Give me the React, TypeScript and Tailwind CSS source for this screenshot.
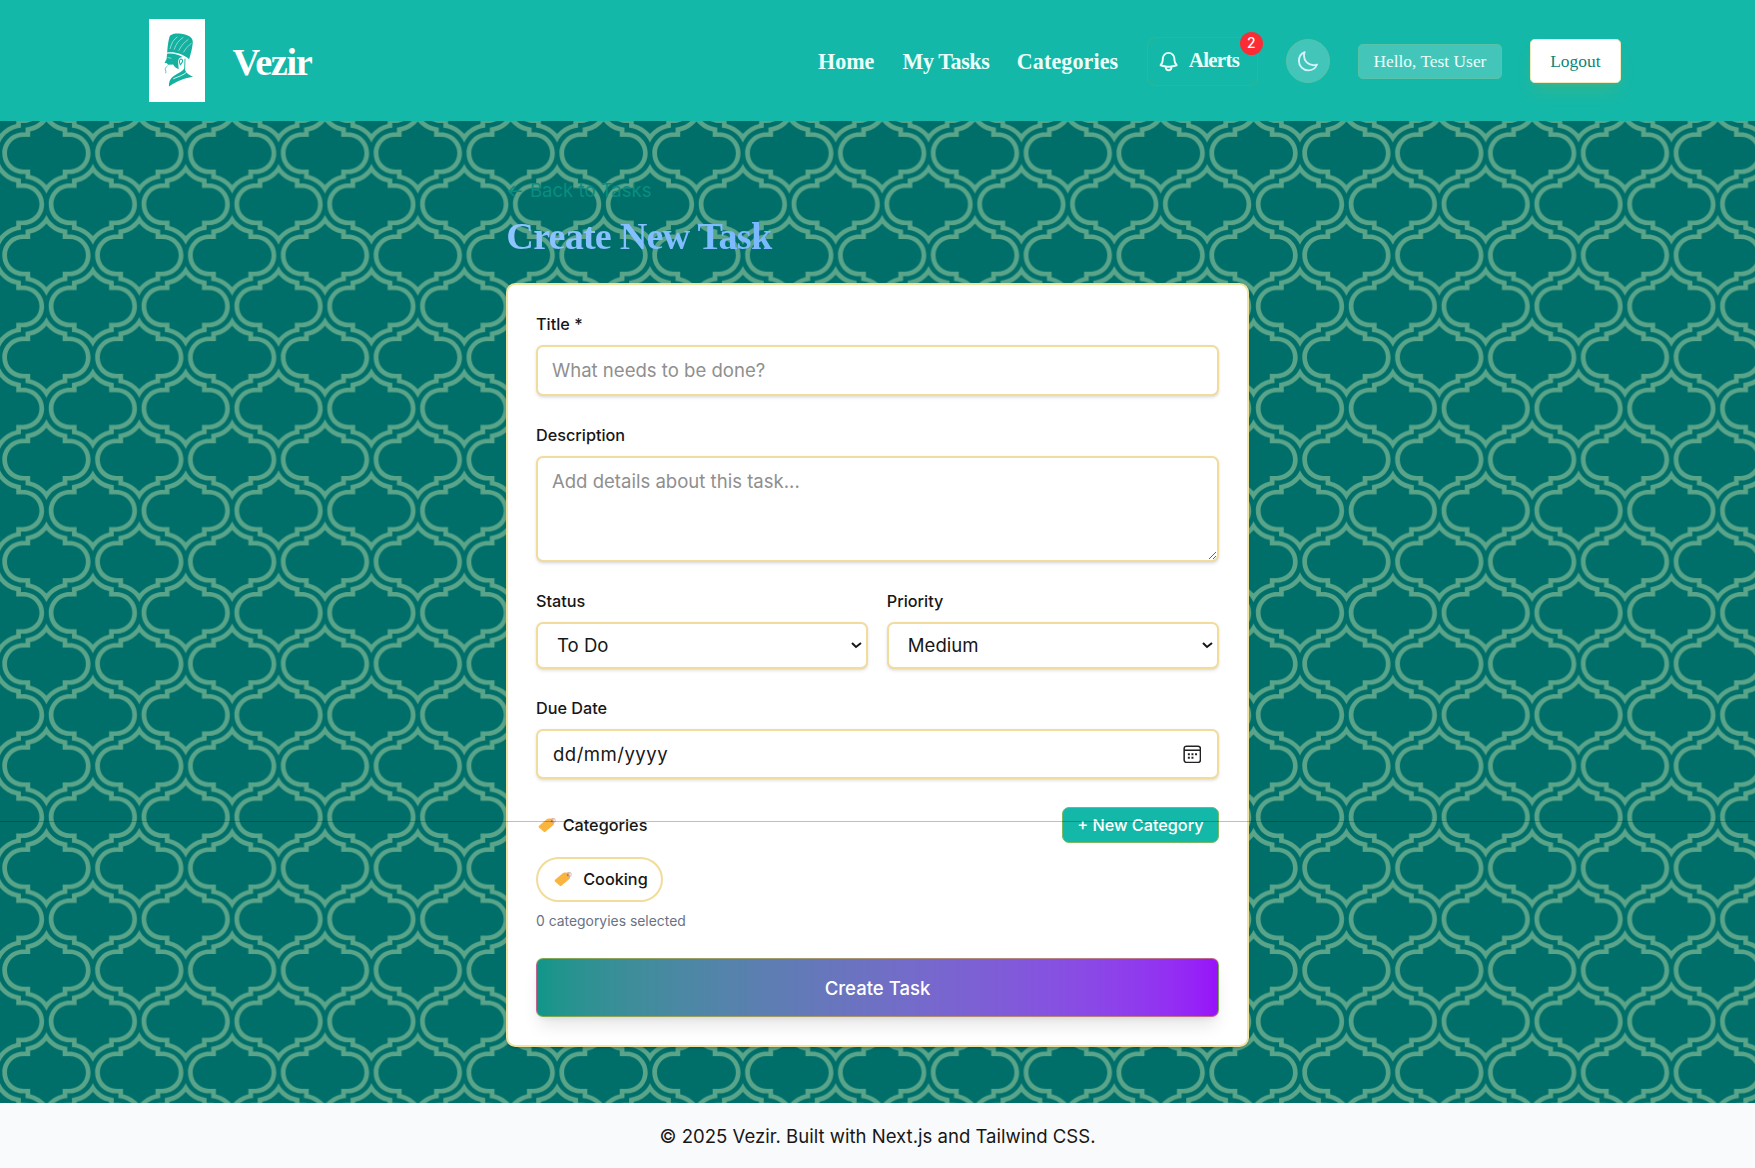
import React from "react";

const moroccan =
  "M22 21.91V26h-2c-9.94 0-18 8.06-18 18 0 9.943 8.058 18 18 18h2v4.09c8.012.722 14.785 5.738 18 12.73 3.212-6.99 9.983-12.008 18-12.73V62h2c9.94 0 18-8.06 18-18 0-9.943-8.058-18-18-18h-2v-4.09c-8.012-.722-14.785-5.738-18-12.73-3.212 6.99-9.983 12.008-18 12.73zM54 58v4.696c-5.574 1.316-10.455 4.428-14 8.69-3.545-4.262-8.426-7.374-14-8.69V58h-5.993C12.27 58 6 51.734 6 44c0-7.732 6.275-14 14.007-14H26v-4.696c5.574-1.316 10.455-4.428 14-8.69 3.545 4.262 8.426 7.374 14 8.69V30h5.993C67.73 30 74 36.266 74 44c0 7.732-6.275 14-14.007 14H54zM42 88c0-9.94 8.06-18 18-18h2v-4.09c8.016-.722 14.787-5.738 18-12.73v7.434c-3.545 4.262-8.426 7.374-14 8.69V74h-5.993C52.275 74 46 80.268 46 88h-4zm-4 0c0-9.943-8.058-18-18-18h-2v-4.09c-8.012-.722-14.785-5.738-18-12.73v7.434c3.545 4.262 8.426 7.374 14 8.69V74h5.993C27.73 74 34 80.266 34 88h4zm4-88c0 9.943 8.058 18 18 18h2v4.09c8.012.722 14.785 5.738 18 12.73v-7.434c-3.545-4.262-8.426-7.374-14-8.69V14h-5.993C52.27 14 46 7.734 46 0h-4zM0 34.82c3.213-6.992 9.984-12.008 18-12.73V18h2c9.94 0 18-8.06 18-18h-4c0 7.732-6.275 14-14.007 14H14v4.696c-5.574 1.316-10.455 4.428-14 8.69v7.433z";

function Backdrop() {
  return (
    <svg className="absolute inset-0 -z-10 h-full w-full" aria-hidden="true">
      <defs>
        <pattern id="moroccan" width="80" height="88" patternUnits="userSpaceOnUse">
          <path d={moroccan} fill="#5aa489" fillRule="evenodd" />
        </pattern>
      </defs>
      <rect width="100%" height="100%" fill="url(#moroccan)" />
    </svg>
  );
}

function Logo() {
  return (
    <svg viewBox="0 0 48 72" preserveAspectRatio="none" className="h-[72px] w-[48.5px] bg-white" aria-hidden="true">
      <g fill="#14b0a0">
        <path d="M15.500 28.900C15.800 24 16.500 18 17.800 14.500 20 12.600 23 12.300 26 12.600 30 13 33.500 14.200 35 15.400 36.800 16.800 37.600 18.500 37.300 20.800 36.800 25.500 35.500 30.500 34.200 34.600 29 30.300 22 28 15.500 28.900z" />
        <path d="M15.400 29.900C20 29.200 24.500 30.300 28.600 32.700L26.400 33.300C25.300 34 24.800 35.500 24.900 37.500L25.300 43C23.500 43 21.800 41.400 20.600 39.300L16.200 39.400 15.300 38.200 13.200 37.900 15 34.400z" />
        <path d="M30.500 42.300C30.800 46 33.500 48 37.600 49.800 29 51.200 23 54.200 17 58.200 16.800 54.500 17.800 51.600 20.800 49.400 24.500 46.800 28.300 45.600 30.500 42.300z" />
      </g>
      <g fill="none" stroke="#14b0a0" strokeLinecap="round">
        <path d="M26.600 39c-.9-1.700-.8-4.400.6-4.600 1.700 0 1.900 2.200.4 3.900-.2.600-.5 1-.9 1.200" strokeWidth=".9" />
        <path d="M30.700 34.500l-.3 8.500" strokeWidth=".8" />
        <path d="M15.600 40.500c-1.200 1-2 1.800-1.600 3.200.3 1 .6 1.600.4 2.700" strokeWidth=".6" />
      </g>
      <g fill="none" stroke="#fff" strokeWidth=".45" strokeLinecap="round">
        <path d="M18 25.500c1-4.500 3-8 6-10M21.500 26c1.500-4.500 4-8 7.500-10M25.500 27c2-4 4.500-7 7.800-9.200M29.500 28.500c1.800-3 4-5.500 6.500-7.500" />
        <path d="M16.200 33.300l2.600.5" />
        <path d="M21 51.400c4-1.800 8.500-3 11-5.500" strokeWidth=".7" />
      </g>
    </svg>
  );
}

function Tag() {
  return (
    <svg viewBox="0 0 16 14" className="h-3.5 w-4" aria-hidden="true">
      <path d="M.9 7.600 7.800 1.800Q8.300 1.300 9 1.300L12.800 1.500Q13.500 1.600 13.500 2.300L13.800 5.600Q13.800 6.300 13.300 6.800L6.400 12.700Q5.500 13.300 4.800 12.500L.8 9Q.2 8.300.9 7.600z" fill="#fbb53f" />
      <circle cx="13" cy="3" r="1.900" fill="none" stroke="#c9a3a4" strokeWidth=".7" />
      <circle cx="11.900" cy="3.600" r=".7" fill="#b9566a" />
    </svg>
  );
}

const field =
  "w-full shrink-0 rounded-md border-[1.75px] border-[#f1dc9c] bg-white shadow-sm text-base text-[#171717]";
const label = "block h-5 shrink-0 pt-[0.5px] text-sm font-medium text-[#171717]";

export default function App() {
  return (
    <div className="relative isolate flex h-[1006.3px] w-[1512px] flex-col overflow-hidden bg-[#006f6a] font-['Inter',sans-serif] [zoom:1.16071]">
      <Backdrop />
      <header className="h-[104px] shrink-0 bg-[#14b8a8] font-['Liberation_Serif',serif]">
        <div className="mx-auto flex h-full w-[1281px] items-center justify-between">
          <div className="flex items-center gap-[23.5px] pl-[12.8px]">
            <Logo />
            <span className="pt-[5px] text-[33px] font-bold leading-9 tracking-[-1.2px] text-white">Vezir</span>
          </div>
          <nav className="flex items-center gap-6 pt-[1.4px] text-[19px] font-bold text-[#ebfffb]">
            <a className="w-[48.8px] whitespace-nowrap">Home</a>
            <a className="w-[74.4px] whitespace-nowrap tracking-[-0.35px]">My Tasks</a>
            <a className="w-[87.9px] whitespace-nowrap tracking-[0.1px]">Categories</a>
            <a className="relative flex h-[42px] w-[96px] items-center rounded-lg border border-[#32b78d] pl-[8.5px] text-[18px]">
              <svg viewBox="0 0 24 24" className="h-5 w-5" fill="none" stroke="currentColor" strokeWidth="2" strokeLinecap="round" strokeLinejoin="round">
                <path d="M14.857 17.082a23.848 23.848 0 0 0 5.454-1.310A8.967 8.967 0 0 1 18 9.750V9A6 6 0 0 0 6 9v.750a8.967 8.967 0 0 1-2.312 6.022c1.733.640 3.560 1.085 5.455 1.310m5.714 0a24.255 24.255 0 0 1-5.714 0m5.714 0a3 3 0 1 1-5.714 0" />
              </svg>
              <span className="ml-[7px] tracking-[-0.6px]">Alerts</span>
              <span className="absolute -right-[5px] -top-[5px] flex h-5 w-5 items-center justify-center rounded-full bg-[#fb2c36] font-['Inter',sans-serif] text-xs font-medium text-white">2</span>
            </a>
            <span className="flex h-[38px] w-[38px] items-center justify-center rounded-full border border-[#58c3a8] bg-[#43c6b9] text-[#d5f2fb]">
              <svg viewBox="0 0 24 24" className="h-5 w-5" fill="none" stroke="currentColor" strokeWidth="1.900" strokeLinecap="round" strokeLinejoin="round">
                <path d="M21.752 15.002A9.720 9.720 0 0 1 18 15.750c-5.385 0-9.750-4.365-9.750-9.750 0-1.330.266-2.597.748-3.752A9.753 9.753 0 0 0 3 11.250C3 16.635 7.365 21 12.750 21a9.753 9.753 0 0 0 9.002-5.998Z" />
              </svg>
            </span>
            <span className="flex h-[30px] w-[124.2px] items-center justify-center whitespace-nowrap rounded border border-[#58c3a8] bg-[#43c6b9] text-[15px] font-normal">
              Hello, Test User
            </span>
            <button className="h-[38px] w-[78.500px] rounded border border-[#f3e9c0] bg-white text-[15px] font-normal text-[#0f8479] shadow-lg shadow-[#f0b10020]">
              Logout
            </button>
          </nav>
        </div>
      </header>

      <main className="mx-auto w-[639.500px] flex-1 pt-12">
        <a className="flex h-6 pt-[0.5px] text-base text-[#098d80]">
          <span className="w-[20.300px] tracking-tight">←</span>Back to Tasks
        </a>
        <h1 className="mt-2 h-9 whitespace-nowrap bg-gradient-to-r from-[#8ec5ff] to-[#51a2ff] bg-clip-text pt-[2px] font-['Liberation_Serif',serif] text-[33px] font-bold leading-9 tracking-[-0.75px] text-transparent">
          Create New Task
        </h1>
        <form className="mt-6 flex h-[658.500px] flex-col rounded-lg border-[1.75px] border-[#f1e3a0] bg-white p-[23.780px] shadow-sm">
          <label className={label}>Title *</label>
          <input className={`${field} mt-2 h-[43.700px] px-3 pb-px placeholder:text-[#8f8f8f]`} placeholder="What needs to be done?" />
          <label className={`${label} mt-6`}>Description</label>
          <textarea className={`${field} mt-2 h-[91px] px-3 py-2 placeholder:text-[#8f8f8f]`} placeholder="Add details about this task..." />
          <div className="mt-6 grid shrink-0 grid-cols-2 gap-4">
            <div>
              <label className={label}>Status</label>
              <select className={`${field} mt-2 h-10 px-[13px]`}>
                <option>To Do</option>
              </select>
            </div>
            <div>
              <label className={label}>Priority</label>
              <select className={`${field} mt-2 h-10 px-[13px]`}>
                <option>Medium</option>
              </select>
            </div>
          </div>
          <label className={`${label} mt-6`}>Due Date</label>
          <div className={`${field} mt-2 flex h-[43px] items-center justify-between pl-[13px] pr-[13.500px]`}>
            <span className="pt-px tracking-[0.4px]">dd/mm/yyyy</span>
            <svg viewBox="0 0 16 16" className="h-4 w-4" fill="none" stroke="#222" strokeWidth="1.300">
              <rect x="1" y="1" width="14" height="14" rx="2" />
              <path d="M1 4.500h14" />
              <path d="M4.200 8h1.700M7.300 8H9M10.400 8h1.700M4.200 11h1.700M7.300 11H9" strokeWidth="1.800" />
            </svg>
          </div>
          <div className="mt-6 flex h-[31px] shrink-0 items-center justify-between">
            <span className="flex items-center gap-[5px] pl-[2px] pt-px text-sm font-medium text-[#171717]">
              <Tag />
              Categories
            </span>
            <button type="button" className="h-[31px] w-[135.500px] rounded-md border-[1.3px] border-[#7ab965] bg-[#14b8a8] pt-px text-sm font-medium text-white">
              + New Category
            </button>
          </div>
          <div className="mt-3 flex h-[39px] w-[109.600px] shrink-0 items-center rounded-full border-[1.75px] border-[#f1dc9c] pl-[14px] pt-[0.5px] text-sm font-medium text-[#171717]">
            <Tag />
            <span className="ml-[9px]">Cooking</span>
          </div>
          <p className="mt-2 h-4 shrink-0 pt-[0.5px] text-xs text-[#6a7282]">0 categoryies selected</p>
          <button type="button" className="mt-6 h-[51px] shrink-0 rounded-md border border-[#e8b923]/50 bg-gradient-to-r from-[#0f9689] to-[#9810fa] pt-[2.5px] text-base font-medium text-white shadow-lg">
            Create Task
          </button>
        </form>
      </main>

      <footer className="flex h-14 shrink-0 items-center justify-center bg-[#f9fafb] pt-[2px] text-base text-[#171717]">
        © 2025 Vezir. Built with Next.js and Tailwind CSS.
      </footer>
      <div className="absolute left-0 top-[707.300px] h-px w-full bg-black/25" />
    </div>
  );
}
